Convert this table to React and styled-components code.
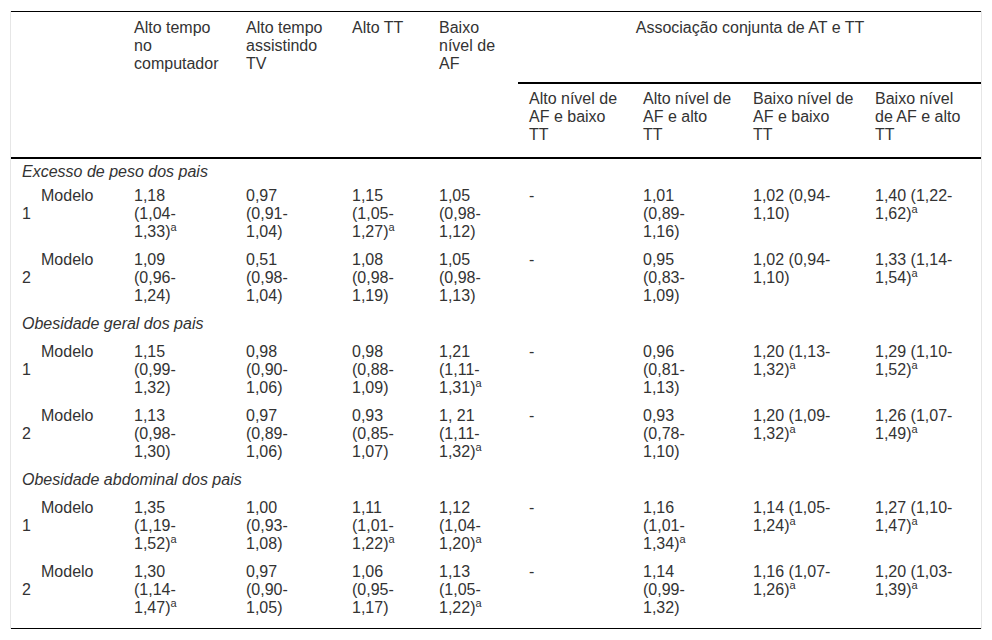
import React from 'react';
import styled, { createGlobalStyle } from 'styled-components';

const GlobalStyle = createGlobalStyle`
  html, body {
    margin: 0;
    padding: 0;
    background: #fff;
  }
  body {
    font-family: "Liberation Sans", Arial, sans-serif;
    font-size: 16px;
    color: #333;
  }
`;

const TableWrapper = styled.div`
  margin: 11px 10px 0;
  border-left: 1px solid #e6e6e6;
  border-right: 1px solid #e6e6e6;
`;

const Table = styled.table`
  width: 970px;
  table-layout: fixed;
  border-collapse: collapse;
  border-top: 1px solid #000;
  border-bottom: 1px solid #000;
  line-height: normal;
`;

const Col = styled.col`
  width: ${({ $w }) => $w}px;
`;

const Head = styled.thead`
  border-bottom: 2px solid #000;
`;

const HeadCell = styled.th`
  font-weight: 400;
  text-align: ${({ $center }) => ($center ? 'center' : 'left')};
  vertical-align: top;
  white-space: nowrap;
  padding: ${({ $sub }) => ($sub ? '6px 10px 13px 11px' : '7px 10px 10px 11px')};
  border-bottom: ${({ $rule }) => ($rule ? '2px solid #000' : 'none')};
`;

const GroupCell = styled.td`
  font-style: italic;
  white-space: nowrap;
  padding: ${({ $first }) => ($first ? '4px 10px 1px 11px' : '5px 10px 5px 11px')};
`;

const Cell = styled.td`
  vertical-align: top;
  white-space: nowrap;
  padding: 5px 10px ${({ $last }) => ($last ? 11 : 5)}px 11px;
`;

const LabelCell = styled(Cell)`
  text-indent: 19px;
`;

const Sup = styled.sup`
  font-size: 11px;
  line-height: 0;
  vertical-align: 6px;
`;

const widths = [112, 112, 106, 87, 90, 114, 110, 122, 117];

const topHeads = [
  '',
  'Alto tempo|no|computador',
  'Alto tempo|assistindo|TV',
  'Alto TT',
  'Baixo|nível de|AF',
];

const subHeads = [
  'Alto nível de|AF e baixo|TT',
  'Alto nível de|AF e alto|TT',
  'Baixo nível de|AF e baixo|TT',
  'Baixo nível|de AF e alto|TT',
];

const groups = [
  {
    title: 'Excesso de peso dos pais',
    rows: [
      ['1,18|(1,04-|1,33)^a', '0,97|(0,91-|1,04)', '1,15|(1,05-|1,27)^a', '1,05|(0,98-|1,12)', '-', '1,01|(0,89-|1,16)', '1,02 (0,94-|1,10)', '1,40 (1,22-|1,62)^a'],
      ['1,09|(0,96-|1,24)', '0,51|(0,98-|1,04)', '1,08|(0,98-|1,19)', '1,05|(0,98-|1,13)', '-', '0,95|(0,83-|1,09)', '1,02 (0,94-|1,10)', '1,33 (1,14-|1,54)^a'],
    ],
  },
  {
    title: 'Obesidade geral dos pais',
    rows: [
      ['1,15|(0,99-|1,32)', '0,98|(0,90-|1,06)', '0,98|(0,88-|1,09)', '1,21|(1,11-|1,31)^a', '-', '0,96|(0,81-|1,13)', '1,20 (1,13-|1,32)^a', '1,29 (1,10-|1,52)^a'],
      ['1,13|(0,98-|1,30)', '0,97|(0,89-|1,06)', '0,93|(0,85-|1,07)', '1, 21|(1,11-|1,32)^a', '-', '0,93|(0,78-|1,10)', '1,20 (1,09-|1,32)^a', '1,26 (1,07-|1,49)^a'],
    ],
  },
  {
    title: 'Obesidade abdominal dos pais',
    rows: [
      ['1,35|(1,19-|1,52)^a', '1,00|(0,93-|1,08)', '1,11|(1,01-|1,22)^a', '1,12|(1,04-|1,20)^a', '-', '1,16|(1,01-|1,34)^a', '1,14 (1,05-|1,24)^a', '1,27 (1,10-|1,47)^a'],
      ['1,30|(1,14-|1,47)^a', '0,97|(0,90-|1,05)', '1,06|(0,95-|1,17)', '1,13|(1,05-|1,22)^a', '-', '1,14|(0,99-|1,32)', '1,16 (1,07-|1,26)^a', '1,20 (1,03-|1,39)^a'],
    ],
  },
];

// text with "|" line breaks and a trailing "^a" superscript
const Lines = ({ text }) => {
  const parts = text.split('|');
  return parts.map((line, i) => {
    const sup = line.endsWith('^a');
    const body = sup ? line.slice(0, -2) : line;
    return (
      <React.Fragment key={i}>
        {i > 0 && <br />}
        {body}
        {sup && <Sup>a</Sup>}
      </React.Fragment>
    );
  });
};

const App = () => {
  return (
    <>
      <GlobalStyle />
      <TableWrapper>
        <Table>
          <colgroup>
            {widths.map((w, i) => (
              <Col key={i} $w={w} />
            ))}
          </colgroup>
          <Head>
            <tr>
              {topHeads.map((h, i) => (
                <HeadCell key={i}>
                  <Lines text={h} />
                </HeadCell>
              ))}
              <HeadCell colSpan={4} $center $rule>
                Associação conjunta de AT e TT
              </HeadCell>
            </tr>
            <tr>
              {topHeads.map((h, i) => (
                <HeadCell key={i} $sub />
              ))}
              {subHeads.map((h) => (
                <HeadCell key={h} $sub>
                  <Lines text={h} />
                </HeadCell>
              ))}
            </tr>
          </Head>
          <tbody>
            {groups.map((g, gi) => (
              <React.Fragment key={g.title}>
                <tr>
                  <GroupCell colSpan={9} $first={gi === 0}>
                    {g.title}
                  </GroupCell>
                </tr>
                {g.rows.map((row, r) => {
                  const last = gi === groups.length - 1 && r === g.rows.length - 1;
                  return (
                    <tr key={r}>
                      <LabelCell $last={last}>
                        <Lines text={`Modelo|${r + 1}`} />
                      </LabelCell>
                      {row.map((v, c) => (
                        <Cell key={c} $last={last}>
                          <Lines text={v} />
                        </Cell>
                      ))}
                    </tr>
                  );
                })}
              </React.Fragment>
            ))}
          </tbody>
        </Table>
      </TableWrapper>
    </>
  );
};

export default App;
